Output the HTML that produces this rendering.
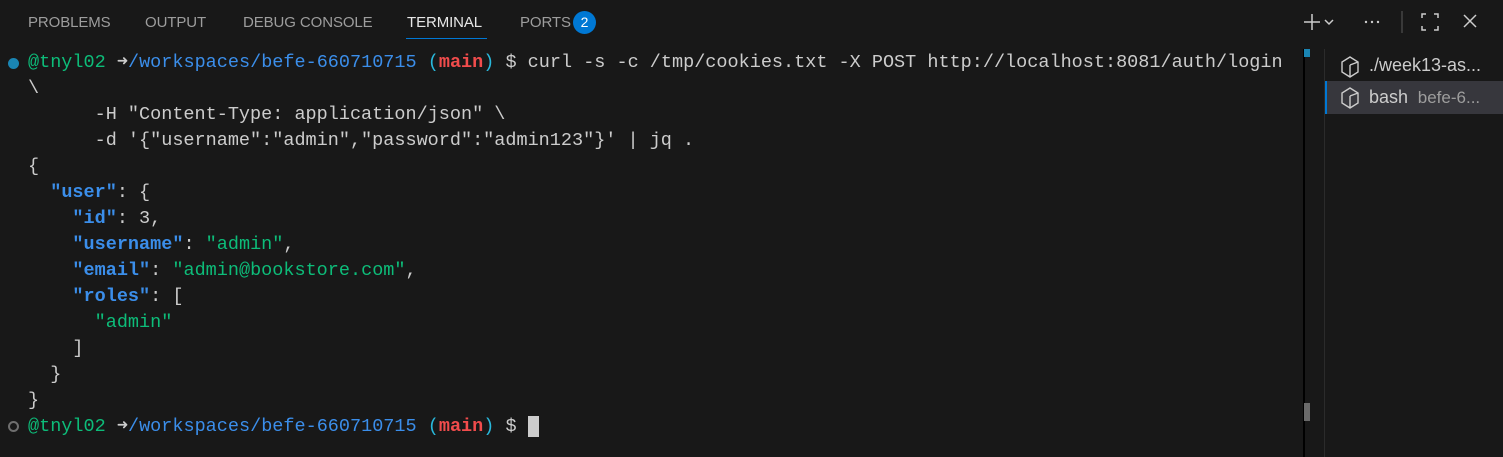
<!DOCTYPE html>
<html><head><meta charset="utf-8"><style>
*{margin:0;padding:0;box-sizing:border-box}
body{width:1503px;height:457px;background:#181818;overflow:hidden;position:relative;font-family:"Liberation Sans",sans-serif;color:#ccc}
.tab{position:absolute;top:14px;font-size:15px;color:#9d9d9d;letter-spacing:-0.1px}
.term{position:absolute;left:28px;top:50px;font-family:"Liberation Mono",monospace;font-size:18.5px;line-height:26px;white-space:pre;color:#cccccc}
.g{color:#0dbc79}.b{color:#3b8eea}.c{color:#29b8db}.r{color:#f14c4c;font-weight:bold}.k{color:#3b8eea;font-weight:bold}.s{color:#0dbc79}
.dot{position:absolute;left:8px;width:11px;height:11px;border-radius:50%}
</style></head><body>
<div class="tab" style="left:28px">PROBLEMS</div>
<div class="tab" style="left:145px">OUTPUT</div>
<div class="tab" style="left:243px">DEBUG CONSOLE</div>
<div class="tab" style="left:407px;color:#e7e7e7">TERMINAL</div>
<div style="position:absolute;left:406px;top:38px;width:81px;height:1px;background:#0078d4"></div>
<div class="tab" style="left:520px">PORTS</div>
<div style="position:absolute;left:573px;top:11px;width:23px;height:23px;border-radius:50%;background:#0078d4;color:#fff;font-size:14px;text-align:center;line-height:23px">2</div>
<svg style="position:absolute;left:1300px;top:10px" width="200" height="24" viewBox="0 0 200 24" fill="none" stroke="#ccc" stroke-width="1.5">
<path d="M4 12h16M12 4v16"/><path d="M25 10l4 4 4-4"/>
<circle cx="66" cy="12" r="1.2" fill="#ccc" stroke="none"/><circle cx="72" cy="12" r="1.2" fill="#ccc" stroke="none"/><circle cx="78" cy="12" r="1.2" fill="#ccc" stroke="none"/>
<path d="M102 1v22" stroke="#444"/>
<path d="M122 8V4h4M134 4h4v4M138 16v4h-4M126 20h-4v-4"/>
<path d="M164 5l12 12M176 5l-12 12"/>
</svg>
<div class="dot" style="top:58px;background:#1a85b3"></div>
<div class="dot" style="top:421px;border:2px solid #6e6e6e"></div>
<div class="term"><span class="g">@tnyl02 </span><b>➜</b><span class="b">/workspaces/befe-660710715</span> <span class="c">(</span><span class="r">main</span><span class="c">)</span> $ curl -s -c /tmp/cookies.txt -X POST http://localhost:8081/auth/login
\
      -H "Content-Type: application/json" \
      -d '{"username":"admin","password":"admin123"}' | jq .
{
  <span class="k">"user"</span>: {
    <span class="k">"id"</span>: 3,
    <span class="k">"username"</span>: <span class="s">"admin"</span>,
    <span class="k">"email"</span>: <span class="s">"admin@bookstore.com"</span>,
    <span class="k">"roles"</span>: [
      <span class="s">"admin"</span>
    ]
  }
}
<span class="g">@tnyl02 </span><b>➜</b><span class="b">/workspaces/befe-660710715</span> <span class="c">(</span><span class="r">main</span><span class="c">)</span> $ <span style="background:#cccccc"> </span></div>
<div style="position:absolute;left:1303px;top:49px;width:2px;height:408px;background:#000"></div>
<div style="position:absolute;left:1304px;top:49px;width:6px;height:8px;background:#1a85b3"></div>
<div style="position:absolute;left:1304px;top:403px;width:6px;height:18px;background:#6a6a6a"></div>
<div style="position:absolute;left:1324px;top:49px;width:1px;height:408px;background:#2b2b2b"></div>
<div style="position:absolute;left:1325px;top:81px;width:178px;height:33px;background:#37373d"></div>
<div style="position:absolute;left:1325px;top:81px;width:2px;height:33px;background:#0078d4"></div>
<svg style="position:absolute;left:1340px;top:56px" width="20" height="22" viewBox="0 0 20 22" fill="none" stroke="#ccc" stroke-width="1.4"><path d="M10 1l8 5v10l-8 5-8-5V6z"/><path d="M10 9l8-3M10 9v12"/></svg>
<svg style="position:absolute;left:1340px;top:87px" width="20" height="22" viewBox="0 0 20 22" fill="none" stroke="#ccc" stroke-width="1.4"><path d="M10 1l8 5v10l-8 5-8-5V6z"/><path d="M10 9l8-3M10 9v12"/></svg>
<div style="position:absolute;left:1369px;top:55px;font-size:18px;color:#ccc">./week13-as...</div>
<div style="position:absolute;left:1369px;top:87px;font-size:18px;color:#ccc">bash <span style="color:#9d9d9d;font-size:17px">&nbsp;befe-6...</span></div>
</body></html>
